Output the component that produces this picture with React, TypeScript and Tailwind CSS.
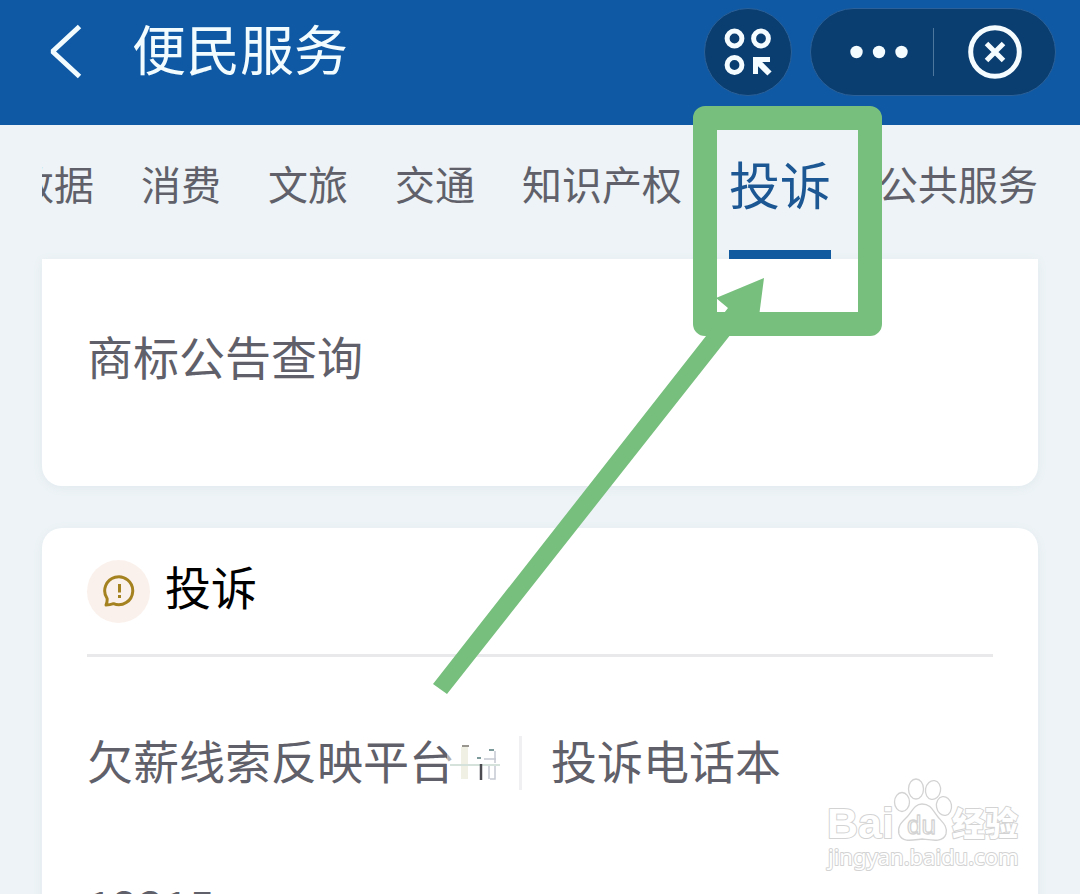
import React from 'react';

const tabs: string[] = ['数据', '消费', '文旅', '交通', '知识产权', '投诉', '公共服务'];

function BackIcon() {
  return (
    <svg width="36" height="56" viewBox="0 0 36 56" fill="none" stroke="#f2fcff" strokeWidth="5">
      <path d="M32.500 2.500 5.500 27.500l27 25" strokeLinejoin="bevel" />
    </svg>
  );
}

function ShortcutIcon() {
  return (
    <svg width="48" height="48" viewBox="0 0 48 48" fill="none" stroke="#f5fcff" strokeWidth="5">
      <circle cx="10.500" cy="10.500" r="7.400" />
      <circle cx="37" cy="10.500" r="7.400" />
      <circle cx="10.500" cy="37" r="7.400" />
      <path d="M31.500 46v-14.500h14.500" />
      <path d="M31.500 31.500 45.500 45.500" strokeWidth="6" />
    </svg>
  );
}

function DotsIcon() {
  return (
    <svg width="60" height="14" viewBox="0 0 60 14" fill="#f5fcff">
      <circle cx="7.500" cy="7" r="6.200" />
      <circle cx="30" cy="7" r="6.200" />
      <circle cx="52.500" cy="7" r="6.200" />
    </svg>
  );
}

function CloseIcon() {
  return (
    <svg width="54" height="54" viewBox="0 0 54 54" fill="none" stroke="#f5fcff" strokeWidth="5">
      <circle cx="27" cy="27" r="24.300" />
      <path d="m18.500 18.500 17 17m0-17-17 17" />
    </svg>
  );
}

function ComplaintIcon() {
  return (
    <svg width="34" height="34" viewBox="0 0 34 34" fill="none" stroke="#a58220" strokeWidth="3">
      <path d="M5.100 24.500A14 14 0 1 1 11.500 29.700Q8 31 4 31Q5.500 27.500 5.100 24.500Z" strokeLinejoin="round" />
      <path d="M17.500 10v8.500M17.500 21v3" />
    </svg>
  );
}

function Smudge() {
  return (
    <svg width="60" height="48" viewBox="0 0 60 48" fill="none" className="-ml-2 shrink-0" aria-hidden="true">
      <path d="M0 9h6v35H0z" fill="#fff" opacity=".5" />
      <path d="M14 8h7v32h-7z" fill="#e9e9d8" opacity=".7" />
      <path d="M3 26h50" stroke="#d5e2dc" strokeWidth="2" />
      <path d="M15 7h7" stroke="#99968f" strokeWidth="2" />
      <path d="M34 25v16" stroke="#4b4b50" strokeWidth="2.500" />
      <path d="M30 19h4M42 11h5" stroke="#7d9a9a" strokeWidth="2" />
      <path d="M42 27v13M48 27v13h-5M37 20h12M48 12v12" stroke="#c6c9d2" strokeWidth="1.500" />
    </svg>
  );
}

function Watermark() {
  return (
    <svg
      className="pointer-events-none absolute top-[774px] left-[824px] font-['Liberation_Sans','Noto_Sans_CJK_SC',sans-serif]"
      width="204"
      height="106"
      viewBox="0 0 204 106"
      fill="#fff"
      stroke="#d3d3d3"
      strokeWidth="2"
      strokeLinejoin="round"
    >
      <g paintOrder="stroke">
        <text x="3" y="64" fontSize="43" fontWeight="700">Bai</text>
        <text x="128" y="62" fontSize="33" fontWeight="900">经验</text>
      </g>
      <g strokeWidth="1.300">
        <ellipse cx="78" cy="28" rx="7.500" ry="9.500" />
        <ellipse cx="92" cy="15" rx="7.500" ry="10" />
        <ellipse cx="109" cy="16" rx="7.500" ry="9.500" transform="rotate(10 109 16)" />
        <ellipse cx="120" cy="32" rx="7.500" ry="9.500" transform="rotate(-10 120 32)" />
        <path d="M98 30C90 30 88 38 83 43C78 48 73 52 75 60C78 69 89 66 98 65C107 66 119 69 122 60C124 52 118 48 114 43C109 37 107 30 98 30Z" />
      </g>
      <text x="83" y="60" fontSize="26" strokeWidth="1.300">du</text>
      <text x="4" y="91" fontSize="22" strokeWidth="2" paintOrder="stroke" className="font-['Noto_Sans',sans-serif]">
        jingyan.baidu.com
      </text>
    </svg>
  );
}

export default function App() {
  return (
    <div className="relative h-screen overflow-hidden bg-[#edf3f6] font-['Noto_Sans_CJK_SC',sans-serif] text-[#5f6069]">
      <header className="flex items-center bg-[#0f59a4] pt-2 pr-6 pb-[29px] pl-[47px] text-[#f2fcff]">
        <button type="button" aria-label="返回" className="mr-[49px]">
          <BackIcon />
        </button>
        <h1 className="pb-2 text-[54px] leading-[80px]">便民服务</h1>
        <button
          type="button"
          aria-label="快捷方式"
          className="ml-auto flex size-[88px] items-center justify-center rounded-full border border-[#2b6198] bg-[#0a3d70]"
        >
          <ShortcutIcon />
        </button>
        <div className="ml-[18px] flex h-[88px] items-center rounded-full border border-[#2b6198] bg-[#0a3d70]">
          <button type="button" aria-label="更多" className="flex h-full items-center pr-6 pl-[38px]">
            <DotsIcon />
          </button>
          <span className="h-12 w-px bg-[#4e779e]" />
          <button type="button" aria-label="关闭" className="flex h-full items-center pr-[33px] pl-[34px]">
            <CloseIcon />
          </button>
        </div>
      </header>

      <nav className="relative z-10 mx-[42px] overflow-hidden">
        <div className="-ml-7 flex gap-[47px] whitespace-nowrap">
          {tabs.map((tab) => (
            <button
              key={tab}
              type="button"
              className={
                tab === '投诉'
                  ? 'shrink-0 border-b-9 border-[#125aa0] pb-2 text-[51px] leading-[117px] text-[#1c5794]'
                  : 'shrink-0 border-b-9 border-transparent pb-2 text-[40px] leading-[117px]'
              }
            >
              {tab}
            </button>
          ))}
        </div>
      </nav>

      <main className="mx-[42px] flex flex-col gap-[42px] text-[46px]">
        <section className="rounded-b-[20px] bg-white px-[45px] pt-[46px] pb-[81px] leading-[100px] shadow-[0_2px_8px_#e2eaef]">
          <a href="#trademark">商标公告查询</a>
        </section>

        <section className="rounded-t-[20px] bg-white px-[45px] shadow-[0_2px_8px_#e2eaef]">
          <div className="flex items-center gap-[15px] border-b-[3px] border-[#e9e9eb] text-black">
            <span className="flex size-[63px] items-center justify-center rounded-full bg-[#fbf1ec]">
              <ComplaintIcon />
            </span>
            <h2 className="pb-3 leading-[114px]">投诉</h2>
          </div>
          <div className="grid grid-cols-[48%_52%] pt-8 leading-[54px] whitespace-nowrap">
            <div className="flex h-[148px] items-center">
              <a href="#wages" className="flex h-[54px] w-full items-center border-r-[3px] border-[#f0f0f2]">
                <span className="pb-2">欠薪线索反映平台</span>
                <Smudge />
              </a>
            </div>
            <div className="flex h-[148px] items-center pl-[29px]">
              <a href="#phones" className="pb-2">投诉电话本</a>
            </div>
            <div className="flex h-[148px] items-center">
              <a href="#12315" className="pb-3">12315</a>
            </div>
          </div>
        </section>
      </main>

      <Watermark />

      <div className="pointer-events-none absolute top-[106px] left-[693px] z-20 h-[230px] w-[189px] rounded-xl border-24 border-[#77bf7d]" />
      <svg
        className="pointer-events-none absolute top-[270px] left-[420px] z-20"
        width="360"
        height="430"
        viewBox="420 270 360 430"
        fill="#77bf7d"
      >
        <path d="M433 684 728 308 716 298 764 278 757 332 747 324 731 334 447 694Z" />
      </svg>
    </div>
  );
}
